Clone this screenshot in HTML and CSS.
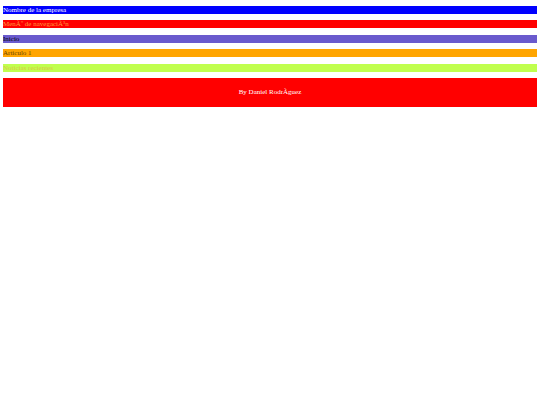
FILE: index.html
```html
<!DOCTYPE html>
<html>
<head>
<meta charset="utf-8">
<link rel="stylesheet" href="styles.css">
</head>
<body>
<div class="page">
  <header class="bar bar-header">Nombre de la empresa</header>
  <nav class="bar bar-nav">MenÃº de navegaciÃ³n</nav>
  <div class="bar bar-home">Inicio</div>
  <article class="bar bar-article">Articulo 1</article>
  <aside class="bar bar-news">Noticias recientes</aside>
  <footer class="footer">By Daniel RodrÃ&shy;guez</footer>
</div>
</body>
</html>
```
FILE: styles.css
```css
html, body {
  margin: 0;
  padding: 0;
  background: #ffffff;
}
.page {
  display: flex;
  flex-direction: column;
  gap: 6.4px;
  padding: 6px 3px 0 3px;
  font-family: "Liberation Serif", "Times New Roman", serif;
  font-size: 7px;
}
.bar {
  height: 8px;
  line-height: 8px;
  white-space: nowrap;
  overflow: hidden;
}
.bar-header {
  background: #0000ff;
  color: #ffffff;
}
.bar-nav {
  background: #ff0000;
  color: #ff9a3c;
}
.bar-home {
  background: #6a5acd;
  color: #000000;
}
.bar-article {
  background: #ffa500;
  color: #6b4400;
}
.bar-news {
  background: #c0ff4e;
  color: #d8c848;
}
.footer {
  background: #ff0000;
  color: #ffffff;
  height: 29px;
  display: flex;
  align-items: center;
  justify-content: center;
}
```
